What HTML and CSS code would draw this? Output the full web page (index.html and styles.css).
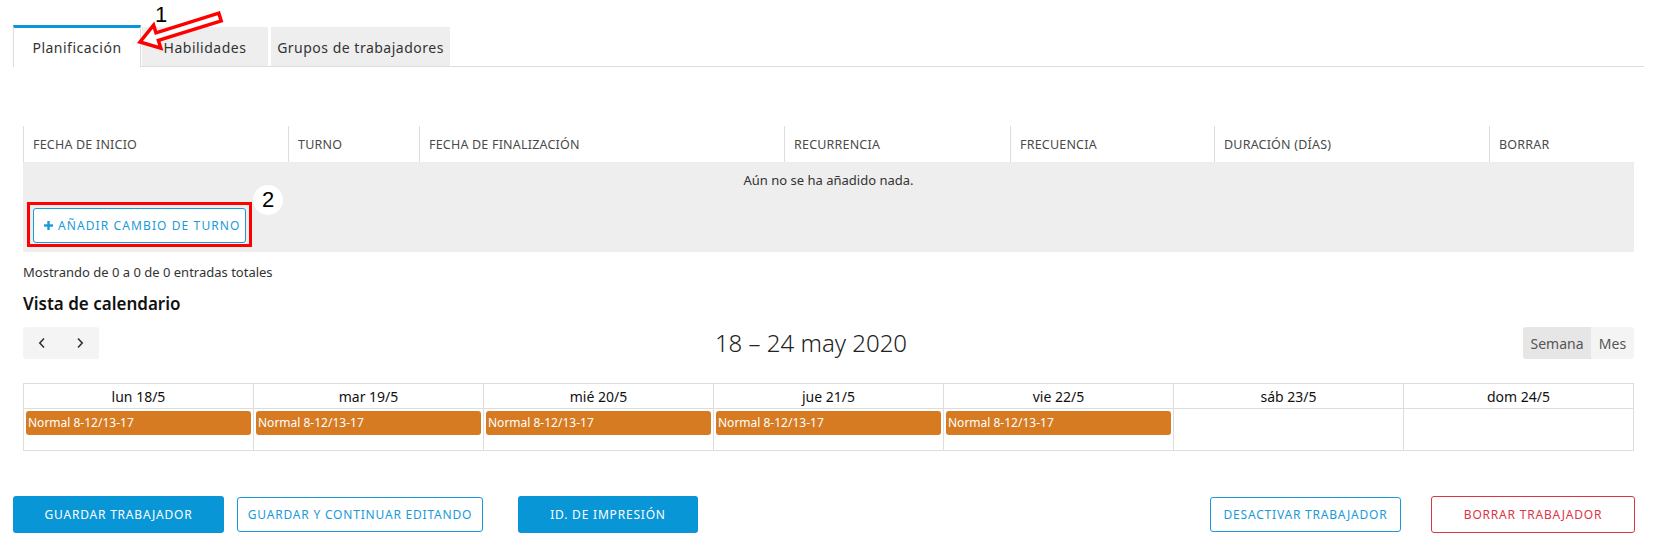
FILE: index.html
```html
<!DOCTYPE html>
<html lang="es">
<head>
<meta charset="utf-8">
<title>Trabajador</title>
<link rel="stylesheet" href="styles.css">
</head>
<body>
<nav class="tabs">
  <div class="tab active">Planificación</div>
  <div class="tab tab-skills">Habilidades</div>
  <div class="tab tab-groups">Grupos de trabajadores</div>
</nav>

<main class="content">
  <div class="dtable">
    <div class="thead">
      <div class="th">FECHA DE INICIO</div>
      <div class="th">TURNO</div>
      <div class="th">FECHA DE FINALIZACIÓN</div>
      <div class="th">RECURRENCIA</div>
      <div class="th">FRECUENCIA</div>
      <div class="th">DURACIÓN (DÍAS)</div>
      <div class="th">BORRAR</div>
    </div>
    <div class="tbody">
      <div class="empty">Aún no se ha añadido nada.</div>
      <div class="add-row">
        <div class="hl-box">
          <button class="btn-add"><svg class="plus" width="9" height="9" viewBox="0 0 9 9"><rect x="3.3" y="0" width="2.4" height="9" fill="#1a9ad8"/><rect x="0" y="3.3" width="9" height="2.4" fill="#1a9ad8"/></svg>AÑADIR CAMBIO DE TURNO</button>
        </div>
      </div>
    </div>
  </div>

  <p class="count">Mostrando de 0 a 0 de 0 entradas totales</p>
  <h2 class="section-title">Vista de calendario</h2>

  <div class="toolbar">
    <div class="btn-group">
      <button class="nav-btn"><svg width="10" height="12" viewBox="0 0 10 12"><path d="M7 1.5 L2.8 6 L7 10.5" fill="none" stroke="#333" stroke-width="1.6"/></svg></button>
      <button class="nav-btn"><svg width="10" height="12" viewBox="0 0 10 12"><path d="M3 1.5 L7.2 6 L3 10.5" fill="none" stroke="#333" stroke-width="1.6"/></svg></button>
    </div>
    <div class="cal-title">18 – 24 may 2020</div>
    <div class="btn-group view">
      <button class="view-btn on">Semana</button>
      <button class="view-btn">Mes</button>
    </div>
  </div>

  <div class="cal">
    <div class="cal-row cal-head">
      <div class="cell">lun 18/5</div>
      <div class="cell">mar 19/5</div>
      <div class="cell">mié 20/5</div>
      <div class="cell">jue 21/5</div>
      <div class="cell">vie 22/5</div>
      <div class="cell">sáb 23/5</div>
      <div class="cell">dom 24/5</div>
    </div>
    <div class="cal-row cal-body">
      <div class="cell"><div class="event">Normal 8-12/13-17</div></div>
      <div class="cell"><div class="event">Normal 8-12/13-17</div></div>
      <div class="cell"><div class="event">Normal 8-12/13-17</div></div>
      <div class="cell"><div class="event">Normal 8-12/13-17</div></div>
      <div class="cell"><div class="event">Normal 8-12/13-17</div></div>
      <div class="cell"></div>
      <div class="cell"></div>
    </div>
  </div>
</main>

<footer class="actions">
  <button class="btn primary w-save">GUARDAR TRABAJADOR</button>
  <button class="btn outline w-cont">GUARDAR Y CONTINUAR EDITANDO</button>
  <button class="btn primary w-print">ID. DE IMPRESIÓN</button>
  <button class="btn outline w-deact">DESACTIVAR TRABAJADOR</button>
  <button class="btn danger w-del">BORRAR TRABAJADOR</button>
</footer>

<svg class="arrow" width="240" height="60" viewBox="0 0 240 60">
  <polygon points="140,42 160.8,48.1 158.4,40.4 221.2,20.8 218.8,13.2 156,32.8 153.6,25.2" fill="#fff" stroke="#f00" stroke-width="3.5" stroke-linejoin="miter"/>
</svg>
<div class="mark-1">1</div>
<div class="mark-2">2</div>
</body>
</html>
```

FILE: styles.css
```css
* { box-sizing: border-box; }
html, body { margin: 0; padding: 0; background: #fff; }
body {
  font-family: "Noto Sans", "Open Sans", sans-serif;
  color: #333;
  position: relative;
  width: 1663px;
  height: 546px;
  overflow: hidden;
}
button { font-family: inherit; cursor: pointer; }

/* Tabs */
.tabs {
  display: flex;
  align-items: flex-end;
  margin: 26px 19px 0 13px;
  height: 41px;
  border-bottom: 1px solid #ddd;
}
.tab {
  height: 39px;
  padding-top: 11px;
  text-align: center;
  font-size: 14px;
  line-height: 20px;
  letter-spacing: 0.5px;
  color: #333;
  background: #eee;
}
.tab.active {
  width: 128px;
  height: 42px;
  margin-bottom: -1px;
  background: #fff;
  border-top: 3px solid #0a96d7;
  border-left: 1px solid #ddd;
  border-right: 1px solid #ddd;
  padding-top: 10px;
}
.tab-skills { width: 126px; margin-left: 1px; }
.tab-groups { width: 179px; margin-left: 3px; }

/* Content */
.content { padding: 0 29px 0 23px; }

.dtable { margin-top: 59px; }
.thead {
  display: grid;
  grid-template-columns: 265px 131px 365px 226px 204px 275px 145px;
  height: 36px;
}
.th {
  border-left: 1px solid #ddd;
  padding-left: 9px;
  display: flex;
  align-items: center;
  font-size: 12.5px;
  color: #4a4a4a;
  letter-spacing: 0.2px;
}
.tbody { background: #eee; }
.empty {
  height: 35px;
  display: flex;
  align-items: center;
  justify-content: center;
  font-size: 13px;
  color: #333;
}
.add-row { padding: 5px 4px; }
.hl-box {
  display: inline-block;
  border: 3px solid #f00;
  padding: 3px 3px 1px 3px;
}
.btn-add {
  display: flex;
  align-items: center;
  height: 35px;
  width: 213px;
  padding: 0 0 0 10px;
  background: #fff;
  border: 1px solid #1a9ad8;
  border-radius: 3px;
  color: #1a9ad8;
  font-size: 12px;
  letter-spacing: 1.1px;
}
.plus { margin-right: 5px; }

.count {
  margin: 11px 0 0;
  font-size: 13px;
  line-height: 18px;
  color: #333;
}
.section-title {
  margin: 11px 0 0;
  font-size: 17px;
  line-height: 24px;
  font-weight: 600;
  color: #111;
}

/* Toolbar */
.toolbar {
  margin-top: 11px;
  display: flex;
  align-items: center;
  justify-content: space-between;
  height: 32px;
}
.btn-group { display: flex; border-radius: 3px; overflow: hidden; height: 32px; }
.nav-btn {
  width: 38px;
  height: 32px;
  border: 0;
  background: #f4f4f4;
  display: flex;
  align-items: center;
  justify-content: center;
  padding: 0;
}
.cal-title {
  font-size: 24px;
  font-weight: 300;
  color: #222;
  line-height: 32px;
}
.view-btn {
  border: 0;
  height: 32px;
  background: #f4f4f4;
  font-size: 14px;
  color: #555;
  padding: 0;
}
.view-btn.on { background: #e6e6e6; width: 68px; }
.view-btn:not(.on) { width: 43px; }

/* Calendar */
.cal {
  margin-top: 24px;
  border: 1px solid #ddd;
  border-right: 0;
}
.cal-row {
  display: grid;
  grid-template-columns: repeat(7, 1fr);
}
.cell { border-right: 1px solid #ddd; }
.cal-head .cell {
  height: 24px;
  display: flex;
  align-items: center;
  justify-content: center;
  font-size: 14px;
  font-weight: 400;
  color: #111;
}
.cal-body { border-top: 1px solid #ddd; }
.cal-body .cell { height: 41px; padding: 2px 2px 0 2px; }
.event {
  height: 24px;
  background: #d67b22;
  border-radius: 3px;
  color: #fff;
  font-size: 12px;
  font-weight: 400;
  line-height: 24px;
  padding-left: 2px;
  white-space: nowrap;
  overflow: hidden;
}

/* Actions */
.actions {
  margin-top: 45px;
  padding: 0 28px 0 13px;
  display: flex;
  align-items: center;
}
.btn {
  height: 37px;
  border-radius: 3px;
  font-size: 12px;
  font-weight: 400;
  letter-spacing: 0.8px;
  padding: 0;
  text-align: center;
  white-space: nowrap;
}
.primary { background: #0896d6; color: #fff; border: 0; }
.outline { background: #fff; color: #1a9ad8; border: 1px solid #1a9ad8; height: 35px; }
.danger { background: #fff; color: #dc3545; border: 1px solid #dc3545; }
.w-save { width: 211px; }
.w-cont { width: 246px; margin-left: 13px; }
.w-print { width: 180px; margin-left: 35px; }
.w-deact { width: 191px; margin-left: auto; }
.w-del { width: 204px; margin-left: 30px; }

/* Annotations overlaid on the screenshot */
.arrow { position: absolute; left: 0; top: 0; }
.mark-1 {
  position: absolute;
  left: 155px;
  top: 4px;
  font-family: "Liberation Sans", Arial, sans-serif;
  font-size: 22px;
  line-height: 22px;
  color: #000;
}
.mark-2 {
  position: absolute;
  left: 253px;
  top: 185px;
  width: 30px;
  height: 30px;
  border-radius: 50%;
  background: #fff;
  font-family: "Liberation Sans", Arial, sans-serif;
  font-size: 22px;
  line-height: 30px;
  text-align: center;
  color: #000;
}
```
